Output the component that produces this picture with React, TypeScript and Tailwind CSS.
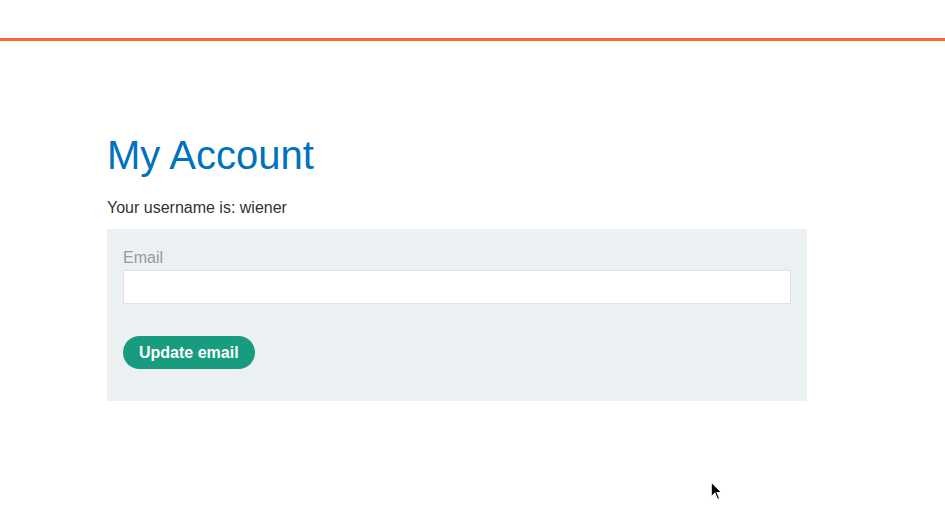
import React from 'react';

const App: React.FC = () => {
  return (
    <div className="relative min-h-[505px] w-[945px] bg-white font-['Liberation_Sans',Arial,sans-serif] text-[#333332]">
      <div className="h-[38px]" />
      <div className="h-[3px] bg-[#ff6633]" />
      <main className="px-[107px] pt-[90px]">
        <h1 className="text-[40px] leading-[48px] text-[#0071bc]">My Account</h1>
        <p className="mt-[19px] text-[16px] leading-[20px]">Your username is: wiener</p>
        <form className="mt-[11px] w-[700px] bg-[#ebf0f2] px-4 pt-[19px] pb-[32px]">
          <label className="block text-[16px] leading-[20px] text-[#999999]">Email</label>
          <input
            type="email"
            className="mt-[2px] block h-[34px] w-full border border-[#e2e2e2] bg-white px-2 outline-none"
          />
          <button
            type="button"
            className="mt-[32px] h-[33px] rounded-full bg-[#179c80] px-4 text-[16px] font-bold text-white"
          >
            Update email
          </button>
        </form>
      </main>
      <svg className="absolute left-[710px] top-[481px]" width="13" height="20" viewBox="0 0 12 19">
        <path d="M1 1 L1 15 L4.5 11.5 L7 17.5 L9 16.6 L6.6 11 L11 11 Z" fill="#000" stroke="#fff" strokeWidth="1" />
      </svg>
    </div>
  );
};

export default App;
